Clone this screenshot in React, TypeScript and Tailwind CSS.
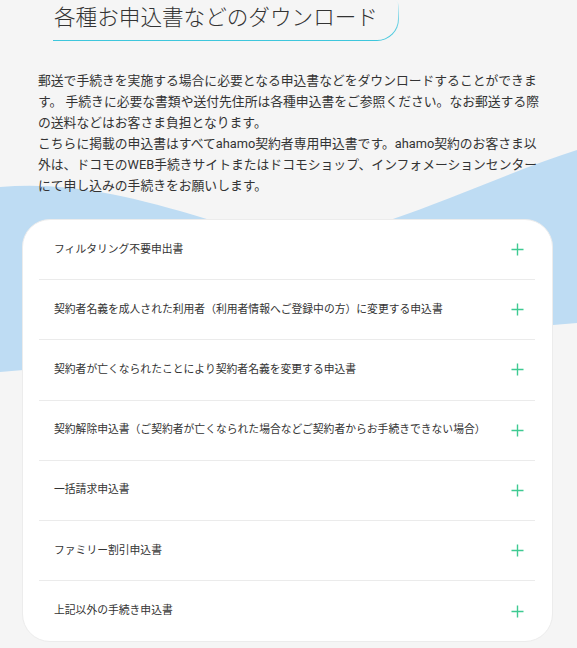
import React from "react"

const FORMS = [
  "フィルタリング不要申出書",
  "契約者名義を成人された利用者（利用者情報へご登録中の方）に変更する申込書",
  "契約者が亡くなられたことにより契約者名義を変更する申込書",
  "契約解除申込書（ご契約者が亡くなられた場合などご契約者からお手続きできない場合）",
  "一括請求申込書",
  "ファミリー割引申込書",
  "上記以外の手続き申込書",
]

function PlusIcon() {
  return (
    <svg width="13" height="13" viewBox="0 0 13 13" fill="none" className="shrink-0">
      <path d="M6.5 0.5V12.5M0.5 6.5H12.5" stroke="#3fca92" strokeWidth="1.4" />
    </svg>
  )
}

export default function App() {
  return (
    <div
      className="relative min-h-screen overflow-hidden bg-[#f5f5f5] text-[#333]"
      style={{ fontFamily: 'Roboto, "Noto Sans CJK JP", sans-serif' }}
    >
      {/* Wave background */}
      <svg
        className="pointer-events-none absolute left-0 top-0"
        width="577"
        height="400"
        viewBox="0 0 577 400"
        fill="none"
      >
        <path
          d="M0 187 C60 182 120 192 210 220 L390 220 C450 200 520 168 577 150 L577 323 L0 372 Z"
          fill="#bedcf3"
        />
      </svg>

      <div className="relative z-10 pb-2">
        {/* Title */}
        <div className="ml-[53px] inline-block rounded-tr-[6px] rounded-br-[22px] bg-gradient-to-b from-[#eef6f8] via-[#6fd2e4] to-[#3cc6dc] pb-px pr-px">
          <div className="rounded-tr-[5px] rounded-br-[21px] bg-[#f5f5f5] pb-[6px] pl-px pr-[20px] pt-[2px]">
            <h2 className="text-[21.6px] font-light leading-[32px] tracking-normal text-[#333]">
              各種お申込書などのダウンロード
            </h2>
          </div>
        </div>

        {/* Description */}
        <p className="mt-[29px] px-[38px] text-[12.8px] leading-[21px] text-[#333]">
          郵送で手続きを実施する場合に必要となる申込書などをダウンロードすることができます。 手続きに必要な書類や送付先住所は各種申込書をご参照ください。なお郵送する際の送料などはお客さま負担となります。
          <br />
          こちらに掲載の申込書はすべてahamo契約者専用申込書です。ahamo契約のお客さま以外は、ドコモのWEB手続きサイトまたはドコモショップ、インフォメーションセンターにて申し込みの手続きをお願いします。
        </p>

        {/* Form list */}
        <div className="ml-[22px] mt-[23px] w-[531px] rounded-[28px] border border-[#ececec] bg-white pl-[16px] pr-[17px]">
          {FORMS.map((label, i) => (
            <div
              key={label}
              className={`flex h-[60.2px] items-center justify-between pl-[15px] pr-[11px] ${
                i < FORMS.length - 1 ? "border-b border-[#ebebeb]" : ""
              }`}
            >
              <span className="text-[10.8px] leading-[1.3] text-[#333]">{label}</span>
              <PlusIcon />
            </div>
          ))}
        </div>
      </div>
    </div>
  )
}
